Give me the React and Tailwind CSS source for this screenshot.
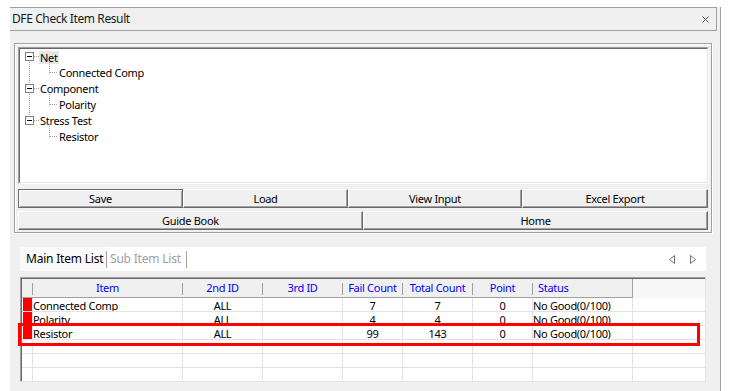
import React from 'react';

const cols = 'grid grid-cols-[11px_150px_80px_80px_60px_70px_60px_100px_1fr]';

const rows = [
  { item: 'Connected Comp', id2: 'ALL', fail: '7', total: '7', point: '0', status: 'No Good(0/100)', mark: true },
  { item: 'Polarity', id2: 'ALL', fail: '4', total: '4', point: '0', status: 'No Good(0/100)', mark: true },
  { item: 'Resistor', id2: 'ALL', fail: '99', total: '143', point: '0', status: 'No Good(0/100)', mark: true },
  { item: '', id2: '', fail: '', total: '', point: '', status: '', mark: false },
  { item: '', id2: '', fail: '', total: '', point: '', status: '', mark: false },
  { item: '', id2: '', fail: '', total: '', point: '', status: '', mark: false },
];

function Btn({ className, label, def }) {
  return (
    <div
      className={
        'flex items-center justify-center pt-px bg-[#f0f0f0] text-black ' +
        (def
          ? 'border border-[#696969] shadow-[inset_1px_1px_0_#fff,inset_-1px_-1px_0_#a0a0a0] '
          : 'border-t border-l border-white border-r border-b border-r-[#696969] border-b-[#696969] shadow-[inset_-1px_-1px_0_#a0a0a0] ') +
        className
      }
    >
      {label}
    </div>
  );
}

function HeadCell({ label, left, color = 'text-[#0000ff]' }) {
  return (
    <div className="flex items-center h-full border-b border-[#a0a0a0] pt-px">
      <div className={'flex-1 truncate ' + color + (left ? ' pl-[5px] text-left' : ' text-center')}>{label}</div>
      <div className="w-px h-[12px] bg-[#a0a0a0]" />
    </div>
  );
}

function TreeLines() {
  // connector drawing for the tree (dotted lines, +/- boxes)
  const box = (cy) => (
    <g key={cy}>
      <rect x="5.5" y={cy - 4.5} width="8" height="8" fill="#fff" stroke="#808080" />
      <line x1="7" y1={cy - 0.5} x2="12" y2={cy - 0.5} stroke="#000" />
      <line x1="14" y1={cy - 0.5} x2="19" y2={cy - 0.5} stroke="#a0a0a0" strokeDasharray="1 1" />
    </g>
  );
  const child = (cy) => (
    <g key={'c' + cy}>
      <line x1="29.5" y1={cy - 11} x2="29.5" y2={cy} stroke="#a0a0a0" strokeDasharray="1 1" />
      <line x1="30" y1={cy - 0.5} x2="38" y2={cy - 0.5} stroke="#a0a0a0" strokeDasharray="1 1" />
    </g>
  );
  return (
    <svg className="absolute left-0 top-0" width="60" height="100">
      <line x1="9.5" y1="13" x2="9.5" y2="36" stroke="#a0a0a0" strokeDasharray="1 1" />
      <line x1="9.5" y1="45" x2="9.5" y2="68" stroke="#a0a0a0" strokeDasharray="1 1" />
      {[8, 40, 72].map(box)}
      {[24, 56, 88].map(child)}
    </svg>
  );
}

export default function App() {
  return (
    <div className="relative w-[730px] h-[391px] bg-white overflow-hidden font-['Noto_Sans',sans-serif] text-[11px] tracking-[-0.3px] text-black">
      <div className="ml-[10px] mt-[7px] w-[711px] h-[384px] bg-[#f0f0f0] border-r border-[#a0a0a0] flex flex-col">
        {/* Title bar */}
        <div className="h-[24px] w-[707px] border-t border-r border-b border-[#a0a0a0] flex items-center justify-between pl-[2px] pr-[7px] text-[12px] tracking-[-0.4px] text-[#1a1a1a]">
          <span>DFE Check Item Result</span>
          <svg width="7" height="7" viewBox="0 0 7 7">
            <path d="M0.5 0.5 L6.5 6.5 M6.5 0.5 L0.5 6.5" stroke="#5a5a5a" strokeWidth="1" />
          </svg>
        </div>

        {/* Group box */}
        <div className="ml-[4px] mt-[12px] w-[698px] h-[190px] border border-[#a0a0a0] shadow-[inset_1px_1px_0_#fff,1px_1px_0_#fff] pl-[3px] pt-[3px] flex flex-col">
          {/* Tree */}
          <div className="w-[691px] h-[137px] border-t border-l border-[#a0a0a0] border-r border-b border-r-white border-b-white">
            <div className="relative w-full h-full bg-white border-t border-l border-[#696969] border-r border-b border-r-[#e3e3e3] border-b-[#e3e3e3]">
              <TreeLines />
              <div className="flex flex-col">
                <div className="h-[16px] flex items-center pl-[19px]">
                  <span className="bg-[#e5e5e5] px-[1px] leading-[13px]">Net</span>
                </div>
                <div className="h-[16px] flex items-center pl-[39px]">Connected Comp</div>
                <div className="h-[16px] flex items-center pl-[20px]">Component</div>
                <div className="h-[16px] flex items-center pl-[39px]">Polarity</div>
                <div className="h-[16px] flex items-center pl-[20px]">Stress Test</div>
                <div className="h-[16px] flex items-center pl-[39px]">Resistor</div>
              </div>
            </div>
          </div>

          {/* Buttons */}
          <div className="mt-[5px] flex h-[19px]">
            <Btn className="w-[165px]" label="Save" def />
            <Btn className="w-[165px]" label="Load" />
            <Btn className="w-[174px]" label="View Input" />
            <Btn className="w-[186px]" label="Excel Export" />
          </div>
          <div className="mt-[3px] flex h-[19px]">
            <Btn className="w-[345px]" label="Guide Book" />
            <Btn className="w-[345px]" label="Home" />
          </div>
        </div>

        {/* Tabs */}
        <div className="ml-[10px] mt-[14px] w-[686px] h-[24px] bg-white flex items-center text-[12px] tracking-[-0.2px]">
          <div className="h-full w-[86px] flex items-center pl-[6px] bg-[#fafafa]">Main Item List</div>
          <div className="w-px h-[17px] bg-[#a0a0a0]" />
          <div className="w-[79px] pl-[3px] text-[#a0a0a0]">Sub Item List</div>
          <div className="w-px h-[17px] bg-[#a0a0a0]" />
          <div className="flex-1" />
          <div className="flex items-center gap-[15px] pr-[10px]">
            <svg width="6" height="9" viewBox="0 0 6 9">
              <path d="M5.5 0.5 L0.5 4.5 L5.5 8.5 Z" fill="none" stroke="#707070" />
            </svg>
            <svg width="6" height="9" viewBox="0 0 6 9">
              <path d="M0.5 0.5 L5.5 4.5 L0.5 8.5 Z" fill="none" stroke="#707070" />
            </svg>
          </div>
        </div>

        {/* Grid */}
        <div className="ml-[10px] mt-[6px] w-[686px] h-[105px] border-t border-l border-[#a0a0a0] border-r border-b border-r-[#e3e3e3] border-b-[#e3e3e3]">
          <div className="w-full h-full bg-white border-t border-l border-[#696969]">
            <div className={cols + ' h-[19px] bg-[#f0f0f0]'}>
              <HeadCell label="" />
              <HeadCell label="Item" />
              <HeadCell label="2nd ID" />
              <HeadCell label="3rd ID" />
              <HeadCell label="Fail Count" />
              <HeadCell label="Total Count" />
              <HeadCell label="Point" />
              <div className="h-full border-r border-b border-[#a0a0a0] pl-[5px] pt-px flex items-center text-[#0000ff]">Status</div>
              <div className="h-full bg-[#f7f7f7]" />
            </div>
            {rows.map((r, i) => (
              <div key={i} className={cols + ' h-[14px] leading-[15px]'}>
                <div className="border-r border-b border-[#e3e3e3] pl-px">
                  {r.mark && <div className="w-[9px] h-[13px] bg-[#ff0000]" />}
                </div>
                <div className="border-r border-b border-[#e3e3e3] overflow-hidden whitespace-nowrap">{r.item}</div>
                <div className="border-r border-b border-[#e3e3e3] overflow-hidden text-center">{r.id2}</div>
                <div className="border-r border-b border-[#e3e3e3]" />
                <div className="border-r border-b border-[#e3e3e3] overflow-hidden text-center">{r.fail}</div>
                <div className="border-r border-b border-[#e3e3e3] overflow-hidden text-center">{r.total}</div>
                <div className="border-r border-b border-[#e3e3e3] overflow-hidden text-center">{r.point}</div>
                <div className="border-r border-b border-[#e3e3e3] overflow-hidden whitespace-nowrap">{r.status}</div>
                <div className="border-b border-[#e3e3e3]" />
              </div>
            ))}
          </div>
        </div>
      </div>

      {/* Highlight annotation */}
      <div className="absolute left-[18px] top-[323px] w-[682px] h-[23px] border-[3px] border-[#ff0000]" />
    </div>
  );
}
